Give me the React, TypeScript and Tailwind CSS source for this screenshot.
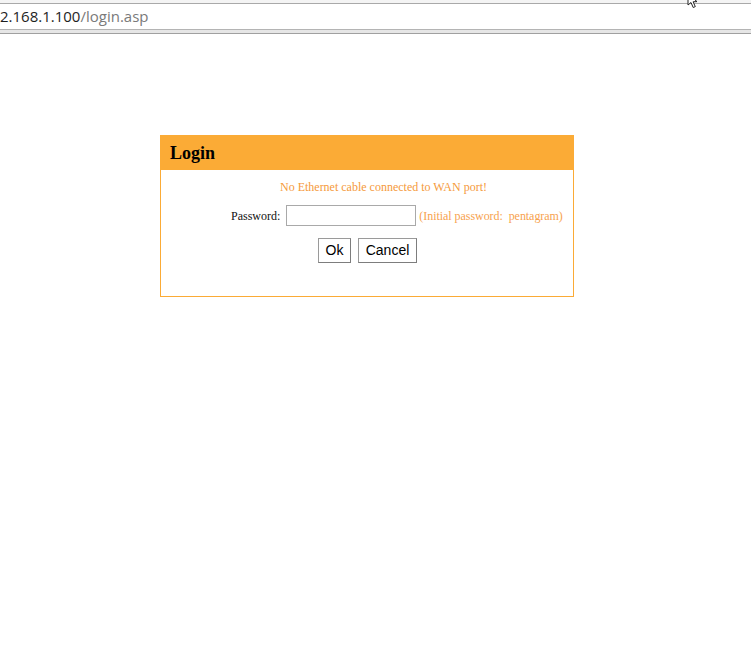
import React from "react";

const serif = { fontFamily: '"Liberation Serif", "Times New Roman", serif' };

function Pointer() {
  return (
    <svg
      className="absolute left-[687px] top-[-6px]"
      width="14"
      height="16"
      viewBox="0 0 14 16"
    >
      <path
        d="M1 0 L1 11 L4 8.5 L6.2 13.5 L8.3 12.6 L6.1 7.8 L10 7.6 Z"
        fill="#fff"
        stroke="#222"
        strokeWidth="1"
        strokeLinejoin="round"
      />
    </svg>
  );
}

function AddressBar() {
  return (
    <div className="relative">
      <div className="h-[3px] bg-[#f4f4f4]" />
      <div className="h-px bg-[#a9a9a9]" />
      <div className="flex h-[25px] items-center bg-white font-['Open_Sans',sans-serif] text-[15px] leading-none">
        <span className="text-[#1e1e1e]">2.168.1.100</span>
        <span className="text-[#7a7a7a]">/login.asp</span>
      </div>
      <div className="h-px bg-[#b4b4b4]" />
      <div className="h-[3px] bg-[#e6e6e6]" />
      <div className="h-px bg-[#a0a0a0]" />
      <Pointer />
    </div>
  );
}

export default function App() {
  return (
    <div className="min-h-screen bg-white">
      <AddressBar />

      <div className="ml-[160px] mt-[101px] w-[414px] border border-[#fbab36]" style={serif}>
        <div className="flex h-[34px] items-center bg-[#fbab36] px-[9px] pt-[1px]">
          <h3 className="text-[18px] font-bold text-black">Login</h3>
        </div>

        <div className="h-[126px] pt-[8px]">
          <p className="pl-[33px] text-center text-[12px] text-[#f59a3c]">
            No Ethernet cable connected to WAN port!
          </p>

          <div className="ml-[70px] mt-[9px] flex items-center text-[12px]">
            <label className="text-[#111]">Password:</label>
            <input
              type="password"
              className="ml-[6px] h-[21px] w-[130px] border border-[#a9a9a9] bg-white px-1 outline-none"
            />
            <span className="ml-[3px] tracking-[-0.05px] text-[#f7a24e]">
              (Initial password:&nbsp; pentagram)
            </span>
          </div>

          <div className="ml-[157px] mt-[12px] flex gap-[7px] font-['Liberation_Sans',Arial,sans-serif] text-[14px] text-black">
            <button className="h-[25px] w-[33px] border-[1.5px] border-[#9a9a9a] border-r-[#7d7d7d] border-b-[#7d7d7d] bg-white">
              Ok
            </button>
            <button className="h-[25px] w-[59px] border-[1.5px] border-[#9a9a9a] border-r-[#7d7d7d] border-b-[#7d7d7d] bg-white">
              Cancel
            </button>
          </div>
        </div>
      </div>
    </div>
  );
}
